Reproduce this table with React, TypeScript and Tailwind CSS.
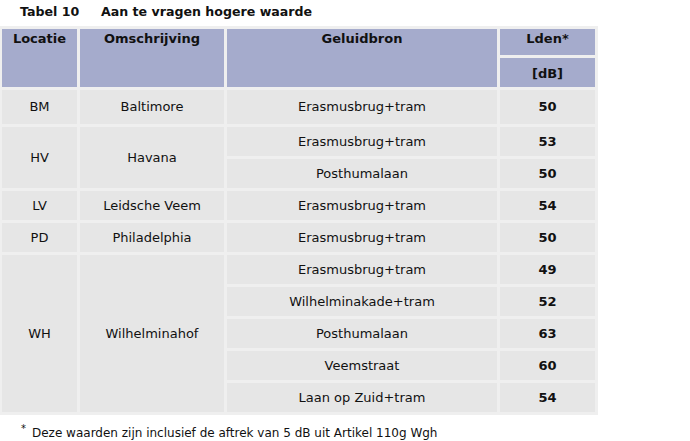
import React from 'react';

type Row = {
  code?: string;
  name?: string;
  span?: number;
  source: string;
  value: number;
  tall?: boolean;
};

const rows: Row[] = [
  { code: 'BM', name: 'Baltimore', span: 1, source: 'Erasmusbrug+tram', value: 50, tall: true },
  { code: 'HV', name: 'Havana', span: 2, source: 'Erasmusbrug+tram', value: 53 },
  { source: 'Posthumalaan', value: 50 },
  { code: 'LV', name: 'Leidsche Veem', span: 1, source: 'Erasmusbrug+tram', value: 54 },
  { code: 'PD', name: 'Philadelphia', span: 1, source: 'Erasmusbrug+tram', value: 50 },
  { code: 'WH', name: 'Wilhelminahof', span: 5, source: 'Erasmusbrug+tram', value: 49 },
  { source: 'Wilhelminakade+tram', value: 52 },
  { source: 'Posthumalaan', value: 63 },
  { source: 'Veemstraat', value: 60 },
  { source: 'Laan op Zuid+tram', value: 54 },
];

export default function App() {
  return (
    <div className="w-[690px] h-[441px] bg-white text-[#111111] font-['DejaVu_Sans',Verdana,sans-serif] overflow-hidden">
      {/* Caption */}
      <div className="h-[26px] pl-[20px] pt-[3px] text-[12.6px] leading-[18px] font-bold flex">
        <span className="w-[81px]">Tabel 10</span>
        <span>Aan te vragen hogere waarde</span>
      </div>

      {/* Table */}
      <table className="-ml-px table-fixed border-separate border-spacing-[3px] bg-[#efefef] w-[599px] text-[13px] leading-[16px]">
        <colgroup>
          <col className="w-[75px]" />
          <col className="w-[144px]" />
          <col className="w-[270px]" />
          <col className="w-[95px]" />
        </colgroup>
        <thead>
          <tr>
            <th rowSpan={2} className="bg-[#a5abcc] p-0 pt-[2px] align-top font-bold">Locatie</th>
            <th rowSpan={2} className="bg-[#a5abcc] p-0 pt-[2px] align-top font-bold">Omschrijving</th>
            <th rowSpan={2} className="bg-[#a5abcc] p-0 pt-[2px] align-top font-bold">Geluidbron</th>
            <th className="bg-[#a5abcc] h-[26px] p-0 pt-[2px] align-top font-bold">Lden*</th>
          </tr>
          <tr>
            <th className="bg-[#a5abcc] h-[29px] p-0 pt-[2px] align-middle font-bold">[dB]</th>
          </tr>
        </thead>
        <tbody>
          {rows.map((r, i) => (
            <tr key={i}>
              {r.code && (
                <td rowSpan={r.span} className="bg-[#e6e6e6] p-0 text-center align-middle">
                  {r.code}
                </td>
              )}
              {r.name && (
                <td rowSpan={r.span} className="bg-[#e6e6e6] p-0 text-center align-middle">
                  {r.name}
                </td>
              )}
              <td className={`bg-[#e6e6e6] p-0 text-center align-middle ${r.tall ? 'h-[34px]' : 'h-[29px]'}`}>
                {r.source}
              </td>
              <td className="bg-[#e6e6e6] p-0 text-center align-middle font-bold">{r.value}</td>
            </tr>
          ))}
        </tbody>
      </table>

      {/* Footnote */}
      <div className="pl-[21px] mt-[10px] text-[12px] leading-[16px]">
        <sup className="text-[10px] mr-[6px]">*</sup>Deze waarden zijn inclusief de aftrek van 5 dB uit Artikel 110g Wgh
      </div>
    </div>
  );
}
